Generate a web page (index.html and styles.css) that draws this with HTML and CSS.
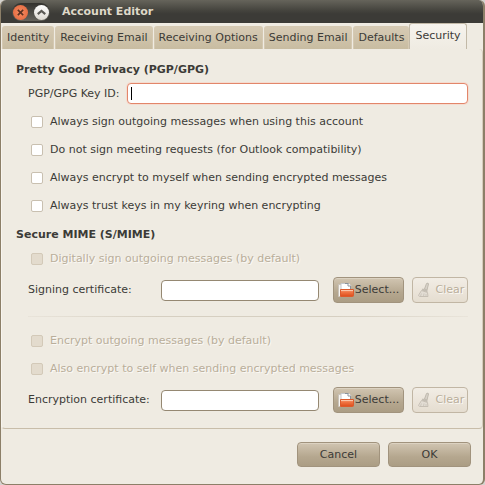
FILE: index.html
```html
<!DOCTYPE html>
<html lang="en">
<head>
    <meta charset="utf-8">
    <title>Account Editor</title>
    <link rel="stylesheet" href="styles.css">
</head>
<body>
    <!-- Shared icons -->
    <svg class="icon-defs" aria-hidden="true">
        <defs>
            <linearGradient id="folderFill" x1="0" y1="0" x2="0" y2="1">
                <stop offset="0" stop-color="#f6a27a"/>
                <stop offset="0.4" stop-color="#ef7443"/>
                <stop offset="1" stop-color="#dd4c1a"/>
            </linearGradient>
            <symbol id="icon-open" viewBox="0 0 16 16">
                <path d="M.5 14.500V2.500H4v12z" fill="#f7f4ef" stroke="#c9c3ba"/>
                <path d="M3 11V1.500h3.500L9 4v7z" fill="#fff" stroke="#c3c7cc"/>
                <path d="M6 10V1h4.500L13 3.500V10z" fill="#fff"/>
                <path d="M6.500 1.500h4M10 1v3h3M12.500 4v4" fill="none" stroke="#8b939c"/>
                <path d="M2.500 7.500h13v6q0 1-1 1h-12z" fill="url(#folderFill)" stroke="#dc5a2c"/>
                <path d="M3 8.500h12" stroke="#fac6aa"/>
            </symbol>
            <symbol id="icon-clear" viewBox="0 0 16 16">
                <path d="M10.500 1.500q2-1 2 .5L11 8 8.500 7z" fill="#d8d2c9" stroke="#bfb8ad"/>
                <path d="M6.500 6.500l5 1.500v2.500L5.500 8.500z" fill="#c3bdb3"/>
                <path d="M5.500 8.500l6 2 .5 4H3.500Q2 14 3 12.500z" fill="#e3ddd4" stroke="#c6bfb4"/>
                <path d="M5.500 11.500l-1 2.500M8 11.500L7.500 14M10 12v2" fill="none" stroke="#cec8be"/>
            </symbol>
        </defs>
    </svg>

    <div class="window">
        <header class="titlebar">
            <div class="window-controls">
                <button type="button" class="control-btn close" aria-label="Close">
                    <svg viewBox="0 0 14 14"><path d="M4.500 4.500l5 5M9.500 4.500l-5 5"/></svg>
                </button>
                <button type="button" class="control-btn shade" aria-label="Roll up">
                    <svg viewBox="0 0 14 14"><path d="M3.500 8.500L7 5.500l3.500 3"/></svg>
                </button>
            </div>
            <h1>Account Editor</h1>
        </header>

        <nav class="tabs" role="tablist">
            <button type="button" class="tab" role="tab">Identity</button>
            <button type="button" class="tab" role="tab">Receiving Email</button>
            <button type="button" class="tab" role="tab">Receiving Options</button>
            <button type="button" class="tab" role="tab">Sending Email</button>
            <button type="button" class="tab" role="tab">Defaults</button>
            <button type="button" class="tab active" role="tab" aria-selected="true">Security</button>
        </nav>

        <main class="panel">
            <section class="group">
                <h2>Pretty Good Privacy (PGP/GPG)</h2>
                <div class="key-row">
                    <label for="keyId">PGP/GPG Key ID:</label>
                    <input type="text" id="keyId" class="entry focused">
                </div>
                <label class="check-row"><input type="checkbox">Always sign outgoing messages when using this account</label>
                <label class="check-row"><input type="checkbox">Do not sign meeting requests (for Outlook compatibility)</label>
                <label class="check-row"><input type="checkbox">Always encrypt to myself when sending encrypted messages</label>
                <label class="check-row"><input type="checkbox">Always trust keys in my keyring when encrypting</label>
            </section>

            <section class="group">
                <h2>Secure MIME (S/MIME)</h2>
                <label class="check-row disabled"><input type="checkbox" disabled>Digitally sign outgoing messages (by default)</label>
                <div class="cert-row">
                    <label for="signCert">Signing certificate:</label>
                    <input type="text" id="signCert" class="entry">
                    <button type="button" class="btn select-btn"><svg class="icon"><use href="#icon-open"/></svg>Select...</button>
                    <button type="button" class="btn clear-btn" disabled><svg class="icon"><use href="#icon-clear"/></svg>Clear</button>
                </div>
                <hr>
                <label class="check-row disabled"><input type="checkbox" disabled>Encrypt outgoing messages (by default)</label>
                <label class="check-row disabled"><input type="checkbox" disabled>Also encrypt to self when sending encrypted messages</label>
                <div class="cert-row">
                    <label for="encCert">Encryption certificate:</label>
                    <input type="text" id="encCert" class="entry">
                    <button type="button" class="btn select-btn"><svg class="icon"><use href="#icon-open"/></svg>Select...</button>
                    <button type="button" class="btn clear-btn" disabled><svg class="icon"><use href="#icon-clear"/></svg>Clear</button>
                </div>
            </section>
        </main>

        <footer class="actions">
            <button type="button" class="btn">Cancel</button>
            <button type="button" class="btn">OK</button>
        </footer>
    </div>
</body>
</html>
```

FILE: styles.css
```css
* {
    margin: 0;
    padding: 0;
    box-sizing: border-box;
}

body {
    background: #d5d3cf;
    color: #3c3b37;
    font-family: "DejaVu Sans", sans-serif;
    font-size: 11px;
    line-height: 18px;
}

button,
input {
    font: inherit;
    color: inherit;
}

.icon-defs {
    display: block;
    width: 0;
    height: 0;
}

.window {
    display: flex;
    flex-direction: column;
    min-height: 100vh;
    background: #efebe2;
    border: 1px solid #8c7f68;
    border-top: none;
    border-right-width: 2px;
    border-radius: 6px;
    overflow: hidden;
}

/* Title bar */
.titlebar {
    display: flex;
    align-items: center;
    gap: 12px;
    height: 23px;
    margin: 0 -2px 0 -1px;
    padding: 1px 12px 0;
    background: linear-gradient(#66645b, #45443e 45%, #3c3b37 60%, #3c3b37);
}

.titlebar h1 {
    font-size: 11px;
    color: #dfd8c8;
}

.window-controls {
    display: flex;
    align-items: center;
    gap: 6px;
    height: 18px;
    padding: 0 1px;
    border-radius: 9px;
    background: linear-gradient(#33322e, #66645d);
}

.control-btn {
    width: 15px;
    height: 15px;
    border: none;
    border-radius: 50%;
}

.control-btn svg {
    display: block;
    width: 15px;
    height: 15px;
    fill: none;
    stroke: #5b3122;
    stroke-width: 1.5;
}

.close {
    background: radial-gradient(#f58b60, #e2633a);
}

.shade {
    background: linear-gradient(#fff, #ddd9d1);
}

.shade svg {
    stroke: #5c5a55;
    stroke-width: 2;
}

/* Tabs */
.tabs {
    display: flex;
    align-items: flex-end;
    gap: 1px;
    height: 26px;
    padding-left: 1px;
}

.tab {
    height: 23px;
    padding: 0 4px;
    border: 1px solid #d5c9b2;
    border-bottom: none;
    border-radius: 3px 3px 0 0;
    background: linear-gradient(#d6cab4, #c8bca1);
    white-space: nowrap;
}

.tab.active {
    height: 26px;
    margin-left: -1px;
    padding: 0 5px 2px;
    border-color: #c2b9a7;
    background: linear-gradient(#f6f3ed, #efebe2);
}

/* Page */
.panel {
    padding: 12px 14px 15px;
    border-bottom: 1px solid #c8bda9;
    border-left: 1px solid #f8f5ef;
    border-right: 1px solid #d5ccbb;
    border-radius: 0 4px 4px 4px;
}

.group + .group {
    margin-top: 6px;
}

.group h2 {
    font-size: 11px;
}

.key-row,
.cert-row {
    display: flex;
    align-items: center;
    padding-left: 12px;
}

.key-row {
    margin: 4px 0;
}

.key-row label {
    width: 99px;
}

.cert-row {
    margin-top: 4px;
}

.cert-row label {
    width: 133px;
}

.entry {
    flex: 1;
    min-width: 0;
    height: 21px;
    padding: 0 4px;
    border: 1px solid #958872;
    border-radius: 4px;
    background: #fff;
    outline: none;
}

/* focused entry with a steady text cursor */
.entry.focused {
    border-color: #e2866a;
    box-shadow: 0 0 0 1px #f5dcd0;
    background: linear-gradient(#000, #000) 3px 3px / 1px 13px no-repeat #fff;
    caret-color: transparent;
}

.check-row {
    display: flex;
    align-items: center;
    gap: 7px;
    height: 28px;
    padding-left: 15px;
}

.check-row input {
    appearance: none;
    width: 12px;
    height: 12px;
    border: 1px solid #c9c0b0;
    border-radius: 2px;
    background: #fff;
}

.check-row input:checked {
    background: #e2866a;
}

.check-row.disabled {
    color: #b9ae9a;
    text-shadow: 1px 1px #fbf9f5;
}

.check-row.disabled input {
    border-color: #d3c9b8;
    background: #e3dbcd;
}

.group h2 + .check-row {
    margin-top: 1px;
}

hr {
    height: 1px;
    margin: 13px 0 10px 12px;
    border: none;
    background: linear-gradient(90deg, #e9e4da, #d6cfc1 30%, #d6cfc1 70%, #e9e4da);
}

/* Buttons */
.btn {
    display: flex;
    align-items: center;
    justify-content: center;
    border: 1px solid #a1937d;
    border-radius: 4px;
    background: linear-gradient(#d1c5b1, #b5a78f 60%, #ab9d84);
    box-shadow: inset 0 1px #dcd2c1;
    white-space: nowrap;
}

.btn:disabled {
    border-color: #c1b6a4;
    background: linear-gradient(#f2ede5, #e5ddd0);
    box-shadow: none;
    color: #b9ae9a;
    text-shadow: 1px 1px #fbf9f5;
}

.cert-row .btn {
    height: 26px;
}

.select-btn {
    width: 71px;
    margin-left: 14px;
}

.clear-btn {
    width: 56px;
    margin-left: 8px;
}

.icon {
    flex: none;
    width: 16px;
    height: 16px;
    margin-right: 1px;
}

.clear-btn .icon {
    margin-right: 4px;
}

.actions {
    display: flex;
    justify-content: flex-end;
    gap: 8px;
    padding: 13px 12px 16px;
}

.actions .btn {
    width: 83px;
    height: 25px;
}
```
